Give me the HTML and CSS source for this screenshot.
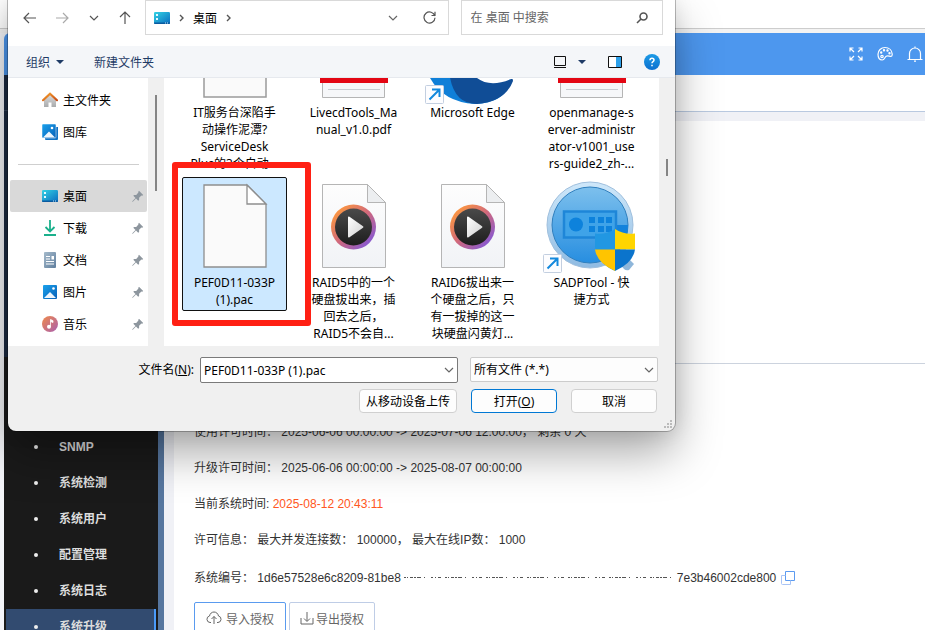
FILE: index.html
```html
<!DOCTYPE html>
<html lang="zh-CN">
<head>
    <meta charset="UTF-8">
    <meta name="viewport" content="width=device-width, initial-scale=1.0">
    <title>系统升级</title>
    <link rel="stylesheet" href="styles.css">
</head>
<body>
    <!-- shared icons -->
    <svg class="defs" width="0" height="0">
        <defs>
            <linearGradient id="gDesk" x1="0" y1="0" x2="1" y2="1"><stop offset="0" stop-color="#33d3e4"/><stop offset="1" stop-color="#0a6cc0"/></linearGradient>
            <linearGradient id="gPic" x1="0" y1="0" x2="1" y2="1"><stop offset="0" stop-color="#1aa2ec"/><stop offset="1" stop-color="#0860b8"/></linearGradient>
            <linearGradient id="gHouse" x1="0" y1="0" x2="0" y2="1"><stop offset="0" stop-color="#dcdcdc"/><stop offset="1" stop-color="#a9abad"/></linearGradient>
            <linearGradient id="gRoof" x1="0" y1="0" x2="1" y2="1"><stop offset="0" stop-color="#f7a12b"/><stop offset="1" stop-color="#c94c17"/></linearGradient>
            <linearGradient id="gDoc" x1="0" y1="0" x2="1" y2="1"><stop offset="0" stop-color="#a5bacb"/><stop offset="1" stop-color="#5f7e9d"/></linearGradient>
            <linearGradient id="gMusic" x1="0" y1="0" x2="1" y2="1"><stop offset="0" stop-color="#f08a4a"/><stop offset="1" stop-color="#a95fb0"/></linearGradient>
            <linearGradient id="gRing" x1="0" y1="0" x2="1" y2="1"><stop offset="0.1" stop-color="#ff9a3c"/><stop offset="0.5" stop-color="#d0687c"/><stop offset="0.9" stop-color="#8258d8"/></linearGradient>
            <linearGradient id="gDark" x1="0" y1="0" x2="0" y2="1"><stop offset="0" stop-color="#4a4a4a"/><stop offset="1" stop-color="#1d1d1d"/></linearGradient>
            <linearGradient id="gPlay" x1="0" y1="0" x2="1" y2="1"><stop offset="0" stop-color="#ffffff"/><stop offset="1" stop-color="#cfcfcf"/></linearGradient>
            <linearGradient id="gPage" x1="0" y1="0" x2="0" y2="1"><stop offset="0" stop-color="#fdfdfd"/><stop offset="1" stop-color="#f1f3f6"/></linearGradient>
            <linearGradient id="gDisc" x1="0" y1="0" x2="0" y2="1"><stop offset="0" stop-color="#7dc0ed"/><stop offset="1" stop-color="#278ee0"/></linearGradient>
            <linearGradient id="gRim" x1="0" y1="0" x2="0" y2="1"><stop offset="0" stop-color="#cfe8fa"/><stop offset="1" stop-color="#8fbbe2"/></linearGradient>
            <linearGradient id="gHelp" x1="0" y1="0" x2="0" y2="1"><stop offset="0" stop-color="#1d9be6"/><stop offset="1" stop-color="#0c70cf"/></linearGradient>

            <symbol id="pin" viewBox="0 0 12 12"><path d="M7 .8 11.2 5l-1 .7-.8-.1-2.3 2.2v2.1l-.9.8L4 8.5.8 11.7H.3v-.5L3.500 8 1.300 5.800l.8-.9h2.100l2.200-2.300-.1-.8z" fill="#8d969e"/></symbol>
            <symbol id="desk" viewBox="0 0 16 12"><rect width="16" height="12" rx="1.200" fill="url(#gDesk)"/><path d="M2 2h2v2H2zM2 6h2v2H2z" fill="#e5fbff"/><path d="M0 10.500h16v.500q0 1-1 1H1q-1 0-1-1z" fill="#0a5a9f"/><path d="M11 10.500h1v1h-1zM13 10.500h1v1h-1z" fill="#bfe8fb"/></symbol>
            <symbol id="chev" viewBox="0 0 10 6"><path d="M1 1l4 4 4-4" fill="none" stroke="#666" stroke-width="1.200"/></symbol>
            <symbol id="shortcut" viewBox="0 0 19 19"><rect x=".5" y=".5" width="18" height="18" rx="1" fill="#fdfdff" stroke="#c3cfe0"/><path d="M4.500 14.500 13.500 5.500M7 4.500H14.500V12" fill="none" stroke="#1489dd" stroke-width="2"/></symbol>
            <symbol id="video" viewBox="0 0 64 84"><path d="M.5.500h45l18 18v65H.500z" fill="url(#gPage)" stroke="#b5b5b5"/><path d="M45.500.500v18h18z" fill="#eceef0" stroke="#b5b5b5"/><circle cx="31.500" cy="43" r="22.500" fill="url(#gRing)"/><circle cx="31.500" cy="43" r="18.500" fill="url(#gDark)"/><path d="M26 33.500v19q0 1.500 1.500.800L41 43.800q1-.8 0-1.500L27.500 32.700Q26 32 26 33.500z" fill="url(#gPlay)"/></symbol>
            <symbol id="pdf" viewBox="0 0 68 84"><path d="M2.500.500h62v83h-62z" fill="#f6f7f9" stroke="#b5b5b5"/><path d="M0 40h68v29H0z" fill="#e30613"/><path d="M8 75.500h52" stroke="#c9ccd2"/></symbol>
        </defs>
    </svg>

    <div class="page">
        <div class="browser-edge"></div>
        <div class="app">
            <header class="topbar">
                <button class="icon-btn" aria-label="全屏"><svg width="14" height="14" viewBox="0 0 14 14"><path d="M1 4.500V1h3.500M1 1l4 4M9.500 1H13v3.500M13 1 9 5M1 9.500V13h3.500M1 13l4-4M13 9.500V13H9.500M13 13 9 9" /></svg></button>
                <button class="icon-btn" aria-label="主题"><svg width="16" height="16" viewBox="0 0 16 16"><path d="M8 1.500C4 1.500 1 4.500 1 8.300c0 3.700 1.800 5.700 4.200 5.700 2.500 0 2.300-2.800 4-3.800 1.700-.9 3.200.3 4.800.2 1-.1 1.300-1.100 1.200-2.300C15 4.200 12 1.500 8 1.500z"/><circle cx="4.200" cy="6.500" r=".6"/><circle cx="7" cy="4.300" r=".6"/><circle cx="10.500" cy="4.500" r=".6"/><circle cx="12.500" cy="7.300" r=".6"/><circle cx="5" cy="10.500" r="1.200"/></svg></button>
                <button class="icon-btn" aria-label="通知"><svg width="16" height="16" viewBox="0 0 16 16"><path d="M.5 13.500h15M2.500 13.500V7.500a5.500 5.500 0 0 1 11 0v6M8 2V.5M7 15.200h2"/></svg></button>
            </header>
            <div class="app-body">
                <nav class="side">
                    <div class="side-group"></div>
                    <ul class="side-list">
                        <li><a href="#">SNMP</a></li>
                        <li><a href="#">系统检测</a></li>
                        <li><a href="#">系统用户</a></li>
                        <li><a href="#">配置管理</a></li>
                        <li><a href="#">系统日志</a></li>
                        <li><a href="#" class="active">系统升级</a></li>
                    </ul>
                </nav>
                <main class="main">
                    <div class="tabs"></div>
                    <section class="card">
                        <div class="upgrade"></div>
                        <div class="license">
                            <p>使用许可时间： 2025-06-06 00:00:00 -&gt; 2025-07-06 12:00:00， 剩余 0 天</p>
                            <p>升级许可时间： 2025-06-06 00:00:00 -&gt; 2025-08-07 00:00:00</p>
                            <p>当前系统时间: <span class="now">2025-08-12 20:43:11</span></p>
                            <p>许可信息： 最大并发连接数： 100000， 最大在线IP数： 1000</p>
                            <p class="serial">系统编号： 1d6e57528e6c8209-81be8
                                <svg class="mask" width="270" height="4" viewBox="0 0 270 4"><path d="M0 1.500h270" stroke="#555" stroke-width="1" stroke-dasharray="2 1 1 2 3 1 2 1 4 3 1 6 2 2 1 2 3 4"/></svg>
                                7e3b46002cde800
                                <button class="copy" aria-label="复制"><svg width="14" height="14" viewBox="0 0 14 14"><path d="M4.500.500h9v9h-9z"/><path d="M4.500 4.500h-4v8q0 1 1 1h8v-4" stroke="#a9c4f5"/></svg></button>
                            </p>
                            <div class="actions">
                                <button class="btn btn-primary"><svg width="16" height="14" viewBox="0 0 16 14"><path d="M5 11.500H4a3.300 3.300 0 0 1-.5-6.500C4 2.500 5.800 1 8 1s4 1.500 4.500 4a3.300 3.300 0 0 1-.5 6.500h-1M8 13V5.500M5.500 8 8 5.500 10.500 8"/></svg>导入授权</button>
                                <button class="btn"><svg width="14" height="14" viewBox="0 0 14 14"><path d="M1 7v6h12V7M7 1v9M4 7.500 7 10.500 10 7.500"/></svg>导出授权</button>
                            </div>
                        </div>
                    </section>
                </main>
            </div>
        </div>
    </div>

    <!-- open file dialog -->
    <div class="dialog" role="dialog" aria-label="打开">
        <div class="nav-row">
            <div class="nav-btns">
                <button aria-label="后退"><svg width="13" height="12" viewBox="0 0 13 12"><path d="M6 1 1 6l5 5M1 6h12" /></svg></button>
                <button aria-label="前进" class="dim"><svg width="13" height="12" viewBox="0 0 13 12"><path d="m7 1 5 5-5 5M12 6H0"/></svg></button>
                <button aria-label="最近"><svg width="10" height="6" viewBox="0 0 10 6"><path d="m1 1 4 4 4-4"/></svg></button>
                <button aria-label="上级"><svg width="12" height="13" viewBox="0 0 12 13"><path d="M1 6l5-5 5 5M6 1v12"/></svg></button>
            </div>
            <div class="address">
                <svg width="16" height="12"><use href="#desk" stroke="none"/></svg>
                <svg class="sep" width="5" height="8" viewBox="0 0 5 8"><path d="m1 1 3 3-3 3"/></svg>
                <span>桌面</span>
                <svg class="sep" width="5" height="8" viewBox="0 0 5 8"><path d="m1 1 3 3-3 3"/></svg>
                <button class="drop" aria-label="展开"><svg width="10" height="6"><use href="#chev"/></svg></button>
                <button aria-label="刷新"><svg width="13" height="13" viewBox="0 0 13 13"><path d="M11.800 5A5.500 5.500 0 1 0 12 6.700M12 .8V4.500H8.500"/></svg></button>
            </div>
            <div class="search">
                <input type="text" placeholder="在 桌面 中搜索" aria-label="搜索">
                <svg width="12" height="12" viewBox="0 0 12 12"><circle cx="7.500" cy="4.500" r="3.500"/><path d="M5 7 1 11"/></svg>
            </div>
        </div>

        <div class="toolbar">
            <button>组织 <svg width="8" height="4" viewBox="0 0 8 4"><path d="M0 0h8L4 4z" fill="#1f3b66"/></svg></button>
            <button>新建文件夹</button>
            <div class="view-btns">
                <button aria-label="视图"><svg width="12" height="12" viewBox="0 0 12 12"><path d="M.5.500h11v9H.500zM0 11.500h12" fill="none" stroke="#111"/></svg></button>
                <button aria-label="更多视图"><svg width="8" height="4" viewBox="0 0 8 4"><path d="M0 0h8L4 4z" fill="#1f3b66"/></svg></button>
                <button aria-label="预览窗格"><svg width="14" height="12" viewBox="0 0 14 12"><path d="M.5.500h13v11H.500z" fill="#fff" stroke="#111"/><path d="M8 1h5v10H8z" fill="#2da0ea"/></svg></button>
                <button aria-label="帮助"><svg width="16" height="16" viewBox="0 0 16 16"><circle cx="8" cy="8" r="8" fill="url(#gHelp)"/><path d="M6 6.200Q6 4.200 8 4.200t2 1.800q0 1-1 1.700T8 9.300M8 10.700v1.500" fill="none" stroke="#fff" stroke-width="1.500"/></svg></button>
            </div>
        </div>

        <div class="browse">
            <div class="places">
                <a href="#"><svg width="16" height="16" viewBox="0 0 16 16"><path d="M2 7.500 8 2l6 5.500V15h-4.500v-4.500h-3V15H2z" fill="url(#gHouse)"/><path d="M1 8.200 8 1.700l7 6.500" fill="none" stroke="url(#gRoof)" stroke-width="2.200" stroke-linecap="round"/></svg>主文件夹</a>
                <a href="#"><svg width="16" height="16" viewBox="0 0 16 16"><path d="M3 3h13v12q0 1-1 1H4q-1 0-1-1z" fill="#1272c4"/><rect width="14" height="14" rx="1" fill="url(#gPic)" stroke="#fff" stroke-width=".5"/><circle cx="10" cy="4" r="1.300" fill="#fff"/><path d="m1 13.500 6-6 6 6z" fill="#eef6fd"/></svg>图库</a>
                <hr>
                <a href="#" class="current"><svg width="16" height="16" viewBox="0 -2 16 16"><use href="#desk" width="16" height="12"/></svg>桌面<svg class="pin" width="12" height="12"><use href="#pin"/></svg></a>
                <a href="#"><svg width="16" height="16" viewBox="0 0 16 16"><path d="M8 0v11M3.500 7 8 11.500 12.500 7M2 15h12" fill="none" stroke="#1bb08c" stroke-width="1.800"/></svg>下载<svg class="pin" width="12" height="12"><use href="#pin"/></svg></a>
                <a href="#"><svg width="16" height="16" viewBox="0 0 16 16"><rect x="2" width="12" height="16" rx="1" fill="url(#gDoc)"/><path d="M4 4.500h4M4 7h4M4 9.500h8M4 12h8" stroke="#fff"/><path d="M9.500 4h2.500v3.500H9.500z" fill="#fff"/></svg>文档<svg class="pin" width="12" height="12"><use href="#pin"/></svg></a>
                <a href="#"><svg width="16" height="16" viewBox="0 0 16 16"><rect x="1" y="1" width="14" height="14" rx="1" fill="url(#gPic)"/><circle cx="11.500" cy="4.500" r="1.300" fill="#fff"/><path d="m2 14 6-6 6 6z" fill="#eef6fd"/></svg>图片<svg class="pin" width="12" height="12"><use href="#pin"/></svg></a>
                <a href="#"><svg width="16" height="16" viewBox="0 0 16 16"><circle cx="8" cy="8" r="8" fill="url(#gMusic)"/><path d="M8.500 10.500V3.500l2.500 1.200v1.800L8.500 5.500" fill="#fff" stroke="#fff" stroke-width=".8"/><circle cx="7" cy="10.800" r="2" fill="#fff"/></svg>音乐<svg class="pin" width="12" height="12"><use href="#pin"/></svg></a>
            </div>
            <div class="places-scroll"><span></span></div>

            <div class="files">
                <div class="file"><div class="tile">
                    <svg width="64" height="84" viewBox="0 0 64 84"><path d="M1 1h62v82H1z" fill="#fafafa" stroke="#9b9b9b" stroke-width="1.500"/></svg>
                    <span>IT服务台深陷手<br>动操作泥潭?<br>ServiceDesk<br>Plus的3个自动...</span>
                </div></div>
                <div class="file"><div class="tile">
                    <svg width="68" height="84"><use href="#pdf"/></svg>
                    <span>LivecdTools_Ma<br>nual_v1.0.pdf</span>
                </div></div>
                <div class="file"><div class="tile">
                    <svg width="92" height="84" viewBox="2 0 92 84"><path d="M3 60Q10 62 86 62 84 89 50 90 16 88 3 60z" fill="#0f7fd8"/><path d="M24 56Q27 90 52 90 80 88 88 67 88 64 86 65 62 74 46 56z" fill="#104d96"/><path d="M46 58Q60 76 86 65L90 64V56H46z" fill="#fff"/><use href="#shortcut" x="0" y="71" width="19" height="19"/></svg>
                    <span>Microsoft Edge</span>
                </div></div>
                <div class="file"><div class="tile">
                    <svg width="68" height="84"><use href="#pdf"/></svg>
                    <span>openmanage-s<br>erver-administr<br>ator-v1001_use<br>rs-guide2_zh-...</span>
                </div></div>
                <div class="file"><div class="tile selected">
                    <svg width="64" height="84" viewBox="0 0 64 84"><path d="M1 1h43l19 19v63H1z" fill="#fafafa" stroke="#8e8e8e" stroke-width="1.300"/><path d="M44 1v19h19z" fill="#fff" stroke="#8e8e8e" stroke-width="1.300"/></svg>
                    <span>PEF0D11-033P<br>(1).pac</span>
                    <div class="mark"></div>
                </div></div>
                <div class="file"><div class="tile">
                    <svg width="64" height="84"><use href="#video"/></svg>
                    <span>RAID5中的一个<br>硬盘拔出来，插<br>回去之后，<br>RAID5不会自...</span>
                </div></div>
                <div class="file"><div class="tile">
                    <svg width="64" height="84"><use href="#video"/></svg>
                    <span>RAID6拔出来一<br>个硬盘之后，只<br>有一拔掉的这一<br>块硬盘闪黄灯...</span>
                </div></div>
                <div class="file"><div class="tile">
                    <svg width="92" height="84" viewBox="3 3 92 84"><path d="m76 82 7-7 8 8-5 6q-3 1-5-1z" fill="#8eb6da"/><circle cx="47" cy="44" r="43" fill="url(#gRim)" stroke="#9fbfdd"/><circle cx="47" cy="44" r="38" fill="url(#gDisc)" stroke="#2f7fbe"/><path d="M58 44h27q0 16-9 26L54 48z" fill="#1282dc"/><path d="M21 30.500h52v26H21z" fill="#3fa3e8" stroke="#1e86d8" stroke-width="2.500"/><circle cx="33" cy="43.500" r="7" fill="#0d82dc"/><path d="M46 36h6v6h-6zM55 36h6v6h-6zM63 36h6v6h-6zM46 45h6v6h-6zM55 45h6v6h-6zM63 45h6v6h-6z" fill="#0d82dc"/><path d="M72 48Q63 54 52 52.500V66Q54 82 72 90z" fill="#2197e2"/><path d="M72 48q9 6 20 4.500V68.500H72z" fill="#ffd500"/><path d="M52 68.500h20V90Q54 82 52 68.500z" fill="#ffc400"/><path d="M72 68.500h20Q90 82 72 90z" fill="#0b74cc"/><use href="#shortcut" x="0" y="73" width="19" height="19"/></svg>
                    <span>SADPTool - 快<br>捷方式</span>
                </div></div>
            </div>
            <div class="files-scroll"><span></span></div>
        </div>

        <form class="dialog-foot" onsubmit="return false">
            <div class="foot-row">
                <label for="fileName">文件名(<u>N</u>):</label>
                <div class="combo name">
                    <input type="text" id="fileName" value="PEF0D11-033P (1).pac">
                    <svg width="10" height="6"><use href="#chev"/></svg>
                </div>
                <div class="combo type">
                    <select id="fileType" aria-label="文件类型"><option>所有文件 (*.*)</option></select>
                    <svg width="10" height="6"><use href="#chev"/></svg>
                </div>
            </div>
            <div class="foot-row buttons">
                <button type="button" class="wide">从移动设备上传</button>
                <button type="submit" class="default">打开(<u>O</u>)</button>
                <button type="button">取消</button>
            </div>
            <svg class="grip" width="9" height="9" viewBox="0 0 9 9"><path d="M6 0h2v2H6zM3 3h2v2H3zM6 3h2v2H6zM0 6h2v2H0zM3 6h2v2H3zM6 6h2v2H6z" fill="#bbb"/></svg>
        </form>
    </div>
</body>
</html>
```
FILE: styles.css
```css
* {
    box-sizing: border-box;
}

body {
    margin: 0;
    height: 100vh;
    overflow: hidden;
    background: #f4f5f9;
    color: #333;
    font-family: "Liberation Sans", "Noto Sans CJK SC", sans-serif;
    font-size: 12px;
}

button {
    padding: 0;
    border: none;
    background: none;
    color: inherit;
    font: inherit;
}

a {
    color: inherit;
    text-decoration: none;
}

svg {
    display: block;
    flex: none;
}

.defs {
    position: absolute;
}

.page {
    display: flex;
    flex-direction: column;
    height: 100vh;
}

.browser-edge {
    flex: none;
    height: 33px;
    background: linear-gradient(#fff 28px, #cdcdcd 28px, #cdcdcd 29px, #f3f3f3 29px);
}

.app {
    flex: 1;
    min-height: 0;
    display: flex;
    flex-direction: column;
    margin-left: 4px;
}

.topbar {
    flex: none;
    display: flex;
    justify-content: flex-end;
    align-items: center;
    gap: 14px;
    height: 42px;
    padding-right: 2px;
    border-radius: 6px 0 0 0;
    background: #4d97ee;
}

.icon-btn svg {
    fill: none;
    stroke: #fff;
    stroke-width: 1.2;
}

.app-body {
    flex: 1;
    min-height: 0;
    display: flex;
}

.side {
    flex: none;
    width: 160px;
    background: #1a1a1a;
    border-right: 6px solid #56769f;
}

.side-group {
    height: 282px;
    background: linear-gradient(#1c2b42 35px, #34435a 35px, #34435a 36px, #1c2b42 36px);
}

.side-list {
    margin: 0;
    padding: 72px 0 0 2px;
    list-style: none;
}

.side-list a {
    display: flex;
    align-items: center;
    height: 36px;
    padding-left: 28px;
    color: #ddd;
    font-weight: bold;
    line-height: 16px;
}

.side-list a::before {
    content: "";
    width: 4px;
    height: 4px;
    margin-right: 21px;
    border-radius: 50%;
    background: #eee;
}

.side-list .active {
    width: 150px;
    background: #324b70;
    border-right: 2px solid #4a9af8;
}

.main {
    flex: 1;
    min-width: 0;
    display: flex;
    flex-direction: column;
    background: #f0f1f6;
}

.tabs {
    flex: none;
    height: 37px;
    margin-bottom: 9px;
    background: #fff;
    border-bottom: 1px solid #b9c9e0;
}

.card {
    flex: 1;
    min-height: 0;
    margin-left: 10px;
    background: #fff;
}

.upgrade {
    height: 243px;
    border-bottom: 1px solid #ccd3de;
}

.license {
    padding: 50px 20px 0;
}

.license p {
    margin: 0;
    line-height: 36px;
    white-space: nowrap;
}

.license .now {
    color: #ff5722;
}

.license .serial {
    display: flex;
    align-items: center;
    gap: 3px;
    line-height: 40px;
}

.copy svg {
    margin-left: 2px;
    fill: none;
    stroke: #5c9bf0;
}

.actions {
    display: flex;
    gap: 3px;
    margin-top: 4px;
}

.btn {
    display: flex;
    align-items: center;
    gap: 2px;
    height: 32px;
    padding: 0 10px;
    border: 1px solid #bfcde6;
    border-radius: 2px;
    background: #fff;
    color: #666;
}

.btn svg {
    fill: none;
    stroke: #666;
}

.btn-primary {
    gap: 4px;
    padding: 0 11px;
    border-color: #5a9bef;
}

/* dialog */
.dialog {
    position: absolute;
    top: 0;
    left: 8px;
    right: 250px;
    min-width: 600px;
    overflow: hidden;
    border-radius: 0 0 8px 8px;
    background: #f0f0f0;
    box-shadow: 0 0 0 1px rgba(0, 0, 0, 0.25), 0 0 20px rgba(0, 0, 0, 0.1), 0 22px 46px rgba(0, 0, 0, 0.34);
    color: #000;
    font-family: "Noto Sans", "Noto Sans CJK SC", sans-serif;
}

.nav-row {
    display: grid;
    grid-template-columns: 110px minmax(0, 3fr) minmax(0, 2fr);
    gap: 12px;
    height: 46px;
    padding: 0 12px 11px 15px;
    background: #fff;
}

.nav-btns {
    display: flex;
    align-items: center;
    gap: 20px;
}

.nav-row svg {
    fill: none;
    stroke: #555;
    stroke-width: 1.2;
}

.nav-row .dim svg {
    stroke: #aaa;
}

.address {
    display: flex;
    align-items: center;
    gap: 9px;
    padding: 0 12px 0 8px;
    border: 1px solid #d9d9d9;
}

.address .sep {
    stroke-width: 1.4;
}

.address .drop {
    margin-left: auto;
    margin-right: 16px;
}

.search {
    display: flex;
    align-items: center;
    padding: 0 14px 0 9px;
    border: 1px solid #d9d9d9;
}

.search input {
    flex: 1;
    min-width: 0;
    padding: 0;
    border: none;
    font: inherit;
}

.search input::placeholder {
    color: #666;
}

.search svg {
    stroke-width: 1.6;
}

.toolbar {
    display: flex;
    align-items: center;
    gap: 30px;
    height: 32px;
    padding: 0 15px 0 18px;
    border-bottom: 1px solid #e6e9ee;
    background: #f4f6f9;
    color: #1f3b66;
}

.toolbar button {
    display: flex;
    align-items: center;
    gap: 6px;
}

.view-btns {
    display: flex;
    align-items: center;
    gap: 22px;
    margin-left: auto;
}

.view-btns button:nth-child(2) {
    margin-left: -10px;
}

.browse {
    display: flex;
    height: 268px;
}

.places {
    flex: none;
    width: 140px;
    padding: 6px 1px 0 2px;
    background: #fff;
}

.places a {
    display: flex;
    align-items: center;
    gap: 5px;
    height: 32px;
    padding: 0 3px 0 32px;
    border-radius: 2px;
}

.places .current {
    background: #d9d9d9;
}

.places .pin {
    margin-left: auto;
}

.places hr {
    margin: 16px 8px 15px;
    border: none;
    border-top: 1px solid #cfcfcf;
}

.places-scroll,
.files-scroll {
    flex: none;
    display: flex;
    justify-content: center;
    width: 16px;
}

.places-scroll span {
    width: 2px;
    height: 96px;
    margin-top: 17px;
    background: #858585;
}

.files-scroll span {
    width: 2px;
    height: 17px;
    margin-top: 81px;
    background: #858585;
}

.files {
    flex: 1;
    display: grid;
    grid-template-columns: repeat(4, 1fr);
    grid-auto-rows: 165px;
    align-content: end;
    row-gap: 5px;
    padding: 0 8px 4px 11px;
    overflow: hidden;
    background: #fff;
}

.tile {
    position: relative;
    width: 105px;
    margin: 0 auto;
    padding-top: 7px;
    text-align: center;
    line-height: 17px;
}

.tile > svg {
    margin: 0 auto 6px;
    overflow: visible;
}

.tile span {
    display: block;
    white-space: nowrap;
}

.selected {
    padding: 6px 0 2px;
    border: 1px solid #111;
    border-radius: 2px;
    background: #cce8ff;
}

.mark {
    position: absolute;
    z-index: 1;
    inset: -16px -25px -16px -11px;
    border: 6px solid #ff2014;
    border-radius: 3px;
}

.dialog-foot {
    position: relative;
    display: flex;
    flex-direction: column;
    gap: 6px;
    padding: 11px 17px 18px;
}

.foot-row {
    display: flex;
    justify-content: flex-end;
    gap: 12px;
}

.foot-row label {
    margin-right: -6px;
    line-height: 26px;
}

.combo {
    position: relative;
    height: 26px;
}

.combo.name {
    width: 258px;
}

.combo.type {
    width: 188px;
}

.combo input,
.combo select {
    appearance: none;
    width: 100%;
    height: 26px;
    padding: 0 3px;
    border: 1px solid #7a7a7a;
    border-radius: 2px;
    background: #fff;
    color: #000;
    font: inherit;
}

.combo select {
    height: 25px;
    border-color: #ccc;
    background: #fdfdfd;
}

.combo svg {
    position: absolute;
    right: 4px;
    top: 10px;
}

.buttons {
    gap: 14px;
    padding-right: 1px;
}

.buttons button {
    width: 86px;
    height: 24px;
    border: 1px solid #d0d0d0;
    border-radius: 4px;
    background: #fdfdfd;
}

.buttons .wide {
    width: 98px;
}

.buttons .default {
    border-color: #0078d4;
}

.grip {
    position: absolute;
    right: 2px;
    bottom: 2px;
}
```
